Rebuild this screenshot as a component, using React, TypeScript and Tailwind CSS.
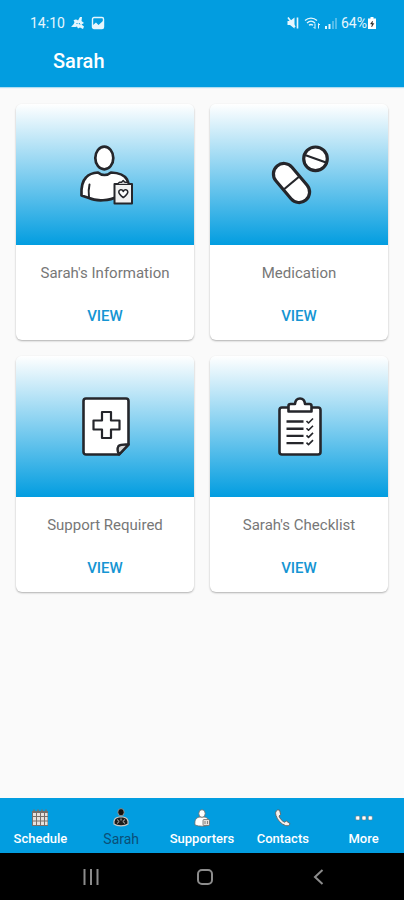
import type { ReactNode } from "react";

interface CardItem {
  title: string;
  icon: ReactNode;
}

interface TabItem {
  label: string;
  icon: ReactNode;
}

const INK = "#25262b";

function PersonIcon() {
  return (
    <svg viewBox="0 0 60 64" className="w-[60px] h-16" fill="#fff" stroke={INK} strokeWidth="2.700" strokeLinejoin="round" strokeLinecap="round">
      <ellipse cx="29.300" cy="15" rx="9" ry="11.300" />
      <path d="M23 29.500c2 1.700 4 2.500 6.500 2.500s4.500-.8 6.500-2.500c8 .3 13.500 2.500 16 7 2 4 3 9 3 17H42c-7 4.500-21 5-28 1.500l-7.500-2.500c-.5-9 1-14.500 4.500-18 2.500-3 7-4.700 12-5z" />
      <path d="M14 54.500c-.6-5-.4-9.500 .5-13" fill="none" strokeWidth="2" />
      <path d="M39.500 41h17.500v19.500H39.500z" fill="#f1f1f1" strokeWidth="2" />
      <path d="M42.500 41l2-1.800h2l1.700-1.700 1.800 1.700h2l2 1.800" fill="#ccc" strokeWidth="1.500" />
      <path d="M48.300 54.500c-3-2.200-4.500-3.500-4.500-5.500 0-2.600 3.400-3 4.500-.6 1.100-2.400 4.500-2 4.500.6 0 2-1.500 3.300-4.500 5.500z" strokeWidth="1.600" />
    </svg>
  );
}

function PillsIcon() {
  return (
    <svg viewBox="0 0 60 64" className="w-[60px] h-16" fill="#fff" stroke={INK} strokeWidth="3.200">
      <g transform="rotate(-40 22.500 40)">
        <rect x="12" y="17.700" width="21" height="44.600" rx="10.500" />
        <path d="M12 40h21" strokeWidth="2.200" />
      </g>
      <circle cx="46.500" cy="15.800" r="11.800" />
      <path d="M36 12l21 7.500" strokeWidth="2.200" />
    </svg>
  );
}

function SupportIcon() {
  return (
    <svg viewBox="0 0 60 64" className="w-[60px] h-16" fill="#fff" stroke={INK} strokeWidth="2.600" strokeLinejoin="round">
      <path d="M11 3.500h40a2.500 2.500 0 0 1 2.500 2.500v43.500l-9.500 10H11A2.500 2.500 0 0 1 8.500 57V6A2.500 2.500 0 0 1 11 3.500z" />
      <path d="M44 59.500c-1.500-3-2-6-.5-8.500 2.500-2 6-1.500 10-1.500z" fill="#d5d5d5" strokeWidth="2.400" />
      <path d="M27 17h9v8.500h8.500v9H36V43h-9v-8.500h-8.500v-9H27z" strokeWidth="2.200" />
    </svg>
  );
}

function ChecklistIcon() {
  return (
    <svg viewBox="0 0 60 64" className="w-[60px] h-16" fill="#fff" stroke={INK} strokeWidth="2.600" strokeLinejoin="round">
      <rect x="10.500" y="12.500" width="41" height="47" rx="2.500" />
      <path d="M19.500 16.500V11a2 2 0 0 1 2-2H26c.3-3.500 2-5.500 5-5.500s4.700 2 5 5.500h4.500a2 2 0 0 1 2 2v5.500z" />
      <path d="M17.500 26.500h17M17.500 33.700h17M17.500 40.900h17M17.500 48.100h17" strokeWidth="2.400" />
      <path
        d="M37.500 26l2 2 4.500-4.500M37.500 33.200l2 2 4.500-4.500M37.500 40.400l2 2 4.500-4.500M37.500 47.600l2 2 4.500-4.500"
        fill="none"
        strokeWidth="1.600"
      />
    </svg>
  );
}

function ScheduleTabIcon() {
  return (
    <svg viewBox="0 0 20 20" className="size-5">
      <path d="M2 3h16v15H2z" fill="#77706b" />
      <path d="M4 1.500v3M8 1.500v3M12 1.500v3M16 1.500v3" stroke="#77706b" strokeWidth="1.500" />
      <path
        d="M3 5h3v3H3zM7 5h3v3H7zM11 5h3v3h-3zM15 5h2.500v3H15zM3 9h3v3.500H3zM7 9h3v3.500H7zM11 9h3v3.500h-3zM15 9h2.500v3.500H15zM3 13.500h3V17H3zM7 13.500h3V17H7zM11 13.500h3V17h-3zM15 13.500h2.500V17H15z"
        fill="#e6e1dd"
      />
    </svg>
  );
}

function SarahTabIcon() {
  return (
    <svg viewBox="0 0 20 20" className="size-5">
      <path d="M3 16c-.6-4 1-6.500 5-7h4c4 .5 5.600 3 5 7-3 2.500-11 2.500-14 0z" fill="#1c1c1c" stroke="#c9c5c2" strokeWidth="1.200" />
      <ellipse cx="10" cy="4.200" rx="3.200" ry="3.600" fill="#111" stroke="#a9a5a2" strokeWidth=".8" />
      <path d="M6 11.500l2.200 2L6 15.500M10 10.500v2M14 11.500l-2.200 2 2.200 2" fill="none" stroke="#bbb" />
    </svg>
  );
}

function SupportersTabIcon() {
  return (
    <svg viewBox="0 0 20 20" className="size-5" stroke="#6b6866" strokeWidth=".8">
      <path d="M3 17c-.6-5 1-7.500 5-8h4c4 .5 5.500 3 5 8-4 1.600-10 1.600-14 0z" fill="#fff" />
      <ellipse cx="10" cy="5.500" rx="3.200" ry="3.800" fill="#fff" />
      <rect x="11" y="11.500" width="6.500" height="6" rx="1" fill="#e5e0dc" />
      <path d="M13 13v3M15.500 13v3" />
    </svg>
  );
}

function ContactsTabIcon() {
  return (
    <svg viewBox="0 0 20 20" className="size-5">
      <path
        d="M4.500 2c-2 1-2.300 3-1.500 5.500 1.500 4.500 5 8.500 9.500 10 2 .6 4 .2 4.500-1.800L13.300 13l-1.800 1.300C9 13 7 10.800 6 8l1.700-1.500L6.500 2z"
        fill="#f5f2ef"
        stroke="#68615d"
        strokeWidth=".9"
        strokeLinejoin="round"
      />
    </svg>
  );
}

function MoreTabIcon() {
  return (
    <svg viewBox="0 0 20 20" className="size-5" fill="#fff" stroke="#777" strokeWidth=".6">
      <rect x="1.700" y="8" width="4" height="4" rx="1" />
      <rect x="8" y="8" width="4" height="4" rx="1" />
      <rect x="14.300" y="8" width="4" height="4" rx="1" />
    </svg>
  );
}

const CARDS: CardItem[] = [
  { title: "Sarah's Information", icon: <PersonIcon /> },
  { title: "Medication", icon: <PillsIcon /> },
  { title: "Support Required", icon: <SupportIcon /> },
  { title: "Sarah's Checklist", icon: <ChecklistIcon /> },
];

const TABS: TabItem[] = [
  { label: "Schedule", icon: <ScheduleTabIcon /> },
  { label: "Sarah", icon: <SarahTabIcon /> },
  { label: "Supporters", icon: <SupportersTabIcon /> },
  { label: "Contacts", icon: <ContactsTabIcon /> },
  { label: "More", icon: <MoreTabIcon /> },
];

function StatusBar() {
  return (
    <div className="flex items-center justify-between pl-[30px] pr-[27px] h-[46px] text-sm text-[#e6f6fd]">
      <div className="flex items-center gap-1.5">
        <span>14:10</span>
        <svg viewBox="0 0 14 14" className="size-3.5" fill="currentColor">
          <path d="M0 10.500c1.500-1 3-2 3.500-4.500L2.500 4.500C4 3 6 3.300 7 4.500L9 1h2l-.5 4L13 7l-2.500 1.500 2.500 2-1 2.500-3-1.500-2 1-1-2c-2 .8-4 .8-6 0z" />
          <path d="M5.500 7.500h1M8 7l1 1.500" stroke="#029de0" />
        </svg>
        <svg viewBox="0 0 14 14" className="size-3.5" fill="none" stroke="currentColor">
          <rect x="1.500" y="1.500" width="11" height="11" rx="1.500" strokeWidth="1.400" />
          <path d="M2 11V9l3-2.500L7.500 9l5-4.500V12H2z" fill="currentColor" stroke="none" />
        </svg>
      </div>
      <div className="flex items-center gap-1">
        <svg viewBox="0 0 14 14" className="size-3.5" fill="currentColor">
          <path d="M1.500 5H4l4.500-3.500v11L4 9H1.500z" />
          <path d="M2 1.500L9 11M11.500 1.500v11" stroke="currentColor" strokeWidth="1.600" />
        </svg>
        <svg viewBox="0 0 17 14" className="w-[17px] h-3.5" fill="none" stroke="currentColor">
          <path d="M1 4.500c3.500-3.300 8.500-3.300 12 0M3 7c2.500-2.300 5.500-2.300 8 0M5 9.300c1.300-1 2.700-1 4 0" strokeWidth="1.300" />
          <path d="M11 7.500v5M9.500 11l1.500 1.500M14.500 12.500v-5M16 9l-1.500-1.500" />
        </svg>
        <svg viewBox="0 0 12 14" className="w-3 h-3.5" fill="currentColor">
          <path d="M0 10h2v3H0zM3.500 8h2v5h-2z" />
          <path d="M7 5h2v8H7zM10 2h2v11h-2z" opacity=".35" />
        </svg>
        <div className="flex items-center">
          <span>64%</span>
          <svg viewBox="0 0 10 14" className="w-2.5 h-3.5">
            <path d="M3.500 1h3v1.500H9V13H1V2.500h2.500z" fill="#fff" />
            <path d="M5.600 5L3.500 8h1.700l-.6 3L6.900 7.500H5.200z" fill="#222" stroke="#222" strokeWidth=".4" />
          </svg>
        </div>
      </div>
    </div>
  );
}

function Card({ title, icon }: CardItem) {
  return (
    <article className="flex flex-col bg-white rounded-md overflow-hidden shadow-[0_1px_2px_rgba(0,0,0,0.3)]">
      <div className="flex items-center justify-center h-[141px] bg-linear-to-b/srgb from-white to-[#029de0]">
        {icon}
      </div>
      <div className="flex flex-col items-center pt-4 pb-1.5">
        <h2 className="text-[15px] leading-6 text-[#777777]">{title}</h2>
        <button className="mt-[13px] h-9 w-full text-[15px] font-medium text-[#1595d3]">VIEW</button>
      </div>
    </article>
  );
}

function TabBar() {
  const active = "Sarah";
  return (
    <nav className="grid grid-cols-5 h-[55px] bg-[#029de0] text-white">
      {TABS.map((tab) => (
        <button
          key={tab.label}
          className={`flex flex-col items-center pt-2.5 leading-[22px] ${tab.label === active ? "text-sm text-[#0b4f78]" : "text-[13px] font-medium"}`}
        >
          {tab.icon}
          {tab.label}
        </button>
      ))}
    </nav>
  );
}

function SystemNav() {
  return (
    <div className="flex justify-around items-center h-[47px] pl-[34px] pr-7 bg-black text-[#8c8c8c]">
      <button aria-label="Recent apps">
        <svg viewBox="0 0 18 18" className="size-[18px]" stroke="currentColor" strokeWidth="2">
          <path d="M2.500 1v16M9 1v16M15.500 1v16" />
        </svg>
      </button>
      <button aria-label="Home">
        <svg viewBox="0 0 18 18" className="size-[18px]" fill="none" stroke="currentColor" strokeWidth="2">
          <rect x="2" y="2" width="14" height="14" rx="4" />
        </svg>
      </button>
      <button aria-label="Back">
        <svg viewBox="0 0 18 18" className="size-[18px]" fill="none" stroke="currentColor" strokeWidth="2">
          <path d="M12.500 2L5 9l7.500 7" />
        </svg>
      </button>
    </div>
  );
}

export default function App() {
  return (
    <div className="flex flex-col min-h-screen bg-[#fafafa] font-[Roboto,sans-serif]">
      <header className="h-[87px] bg-[#029de0] text-white shadow-[0_1px_1px_rgba(2,157,224,0.3)]">
        <StatusBar />
        <h1 className="pl-[53px] text-xl leading-[30px] font-medium">Sarah</h1>
      </header>
      <main className="flex-1">
        <div className="grid grid-cols-2 gap-4 px-4 pt-[17px] pb-4">
          {CARDS.map((card) => (
            <Card key={card.title} {...card} />
          ))}
        </div>
      </main>
      <TabBar />
      <SystemNav />
    </div>
  );
}
